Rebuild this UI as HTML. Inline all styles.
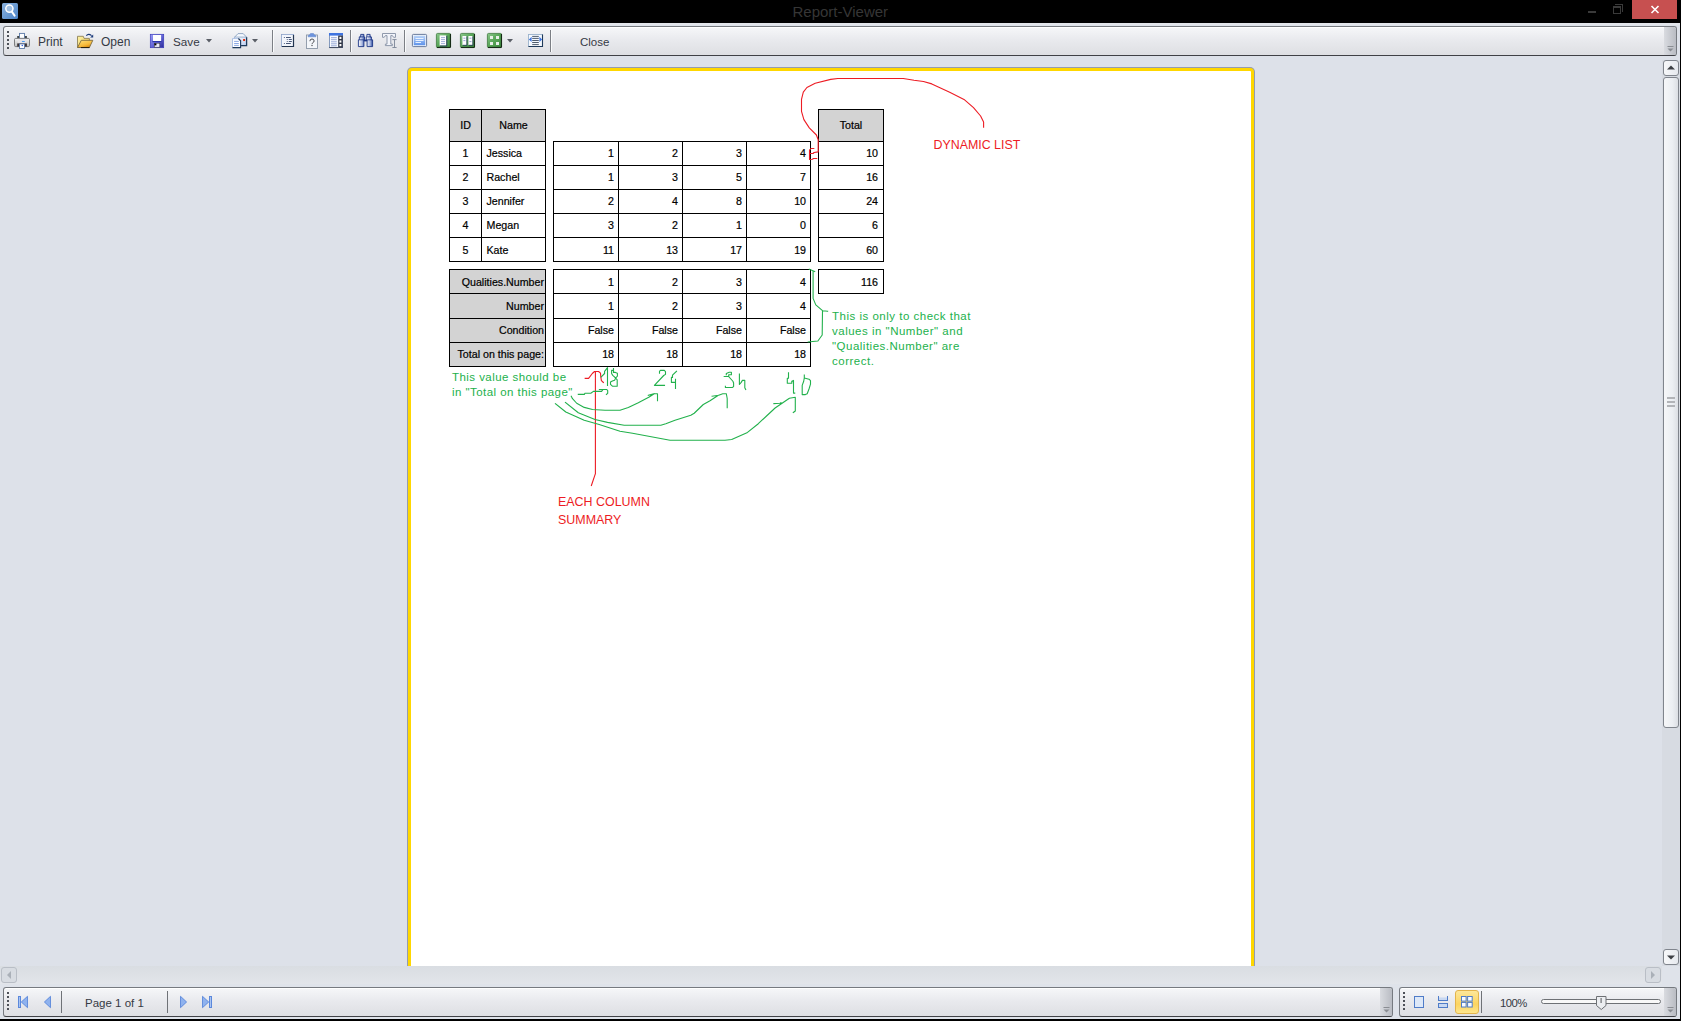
<!DOCTYPE html><html><head><meta charset="utf-8"><style>
html,body{margin:0;padding:0}
body{width:1681px;height:1021px;overflow:hidden;position:relative;background:#dde1e9;font-family:"Liberation Sans",sans-serif}
div{box-sizing:border-box}
.ui{font-family:"Liberation Sans",sans-serif;color:#1e395b}
svg{position:absolute;overflow:visible}
</style></head><body>
<div style="position:absolute;left:0px;top:0px;width:1681px;height:23px;background:#000"></div>
<svg style="left:2px;top:3px" width="16" height="16" viewBox="0 0 16 16">
<defs><linearGradient id="ai" x1="0" y1="0" x2="1" y2="1"><stop offset="0" stop-color="#8ab2de"/><stop offset="1" stop-color="#4d84c6"/></linearGradient></defs>
<rect x="0" y="0" width="16" height="16" rx="1.5" fill="url(#ai)"/>
<circle cx="7.4" cy="5.6" r="3.6" fill="#9fbfe2" stroke="#fff" stroke-width="1.5"/>
<line x1="9.8" y1="8.6" x2="12.6" y2="12.6" stroke="#fff" stroke-width="2" stroke-linecap="round"/>
</svg>
<div style="position:absolute;left:792.5px;top:1.5px;white-space:nowrap;font-size:15px;color:#363636;line-height:20px;">Report-Viewer</div>
<div style="position:absolute;left:1588px;top:11px;width:8px;height:2px;background:#3a3a3a"></div>
<div style="position:absolute;left:1613px;top:6px;width:8px;height:8px;border:1px solid #3a3a3a;border-top-width:2px"></div>
<div style="position:absolute;left:1615px;top:4px;width:8px;height:1px;background:#3a3a3a"></div>
<div style="position:absolute;left:1622px;top:4px;width:1px;height:8px;background:#3a3a3a"></div>
<div style="position:absolute;left:1632px;top:0px;width:45px;height:19px;background:#c75050"></div>
<svg style="left:1651px;top:6px" width="8" height="7" viewBox="0 0 8 7">
<path d="M0.5 0 L7.5 7 M7.5 0 L0.5 7" stroke="#fff" stroke-width="1.6"/></svg>
<div style="position:absolute;left:1680px;top:23px;width:1px;height:998px;background:#000"></div>
<div style="position:absolute;left:0px;top:1019px;width:1681px;height:2px;background:#000"></div>
<div style="position:absolute;left:0px;top:23px;width:1680px;height:37px;background:#dde1e9"></div>
<div style="position:absolute;left:0px;top:23px;width:1680px;height:2px;background:#e2e5eb"></div>
<div style="position:absolute;left:3px;top:26px;width:1674px;height:30px;border:1px solid #767a80;border-bottom-color:#404146;border-radius:3px;background:linear-gradient(#f6f7f9,#e9eaee 45%,#dedfe3);box-shadow:inset 0 1px 0 #fff"></div>
<div style="position:absolute;left:1664px;top:27px;width:12px;height:28px;background:linear-gradient(90deg,#d9dbe0,#b9bcc3);border-radius:0 2px 2px 0"></div>
<svg style="left:1667px;top:46px" width="7" height="7" viewBox="0 0 7 7">
<rect x="0.5" y="0" width="6" height="1" fill="#8a8d93"/><path d="M0.5 2.5 L6.5 2.5 L3.5 5.5Z" fill="#8a8d93"/></svg>
<div style="position:absolute;left:7px;top:31px;width:2px;height:2px;background:#4d5159"></div>
<div style="position:absolute;left:7px;top:35px;width:2px;height:2px;background:#4d5159"></div>
<div style="position:absolute;left:7px;top:39px;width:2px;height:2px;background:#4d5159"></div>
<div style="position:absolute;left:7px;top:43px;width:2px;height:2px;background:#4d5159"></div>
<div style="position:absolute;left:7px;top:47px;width:2px;height:2px;background:#4d5159"></div>
<svg style="left:14px;top:33px" width="16" height="16" viewBox="0 0 16 16">
<defs><linearGradient id="pb" x1="0" y1="0" x2="0" y2="1"><stop offset="0" stop-color="#f4f4f4"/><stop offset="1" stop-color="#bdbdbd"/></linearGradient></defs>
<rect x="3.2" y="3" width="9.7" height="2.4" fill="#3e4446"/>
<rect x="5.5" y="0.4" width="5" height="5" fill="#fff" stroke="#5c7aa6" stroke-width="0.9"/>
<rect x="0.5" y="5.4" width="15" height="8.2" rx="1.2" fill="url(#pb)" stroke="#707274" stroke-width="0.9"/>
<rect x="4" y="5.9" width="7.8" height="4" fill="#e6e4e8"/>
<rect x="7.9" y="8" width="3" height="1.1" rx="0.5" fill="#4a9cf0"/>
<rect x="3.2" y="10.4" width="9.7" height="3.2" fill="#3a3236"/>
<rect x="5.5" y="10.9" width="5" height="4.6" fill="#fff" stroke="#5c7aa6" stroke-width="0.9"/>
<circle cx="8.3" cy="12.5" r="0.8" fill="#3060e0"/>
</svg>
<div style="position:absolute;left:38px;top:34px;white-space:nowrap;font-size:12px;line-height:16px;color:#353944;">Print</div>
<svg style="left:77px;top:33px" width="17" height="15" viewBox="0 0 17 15">
<defs><linearGradient id="fb" x1="0" y1="0" x2="1" y2="1"><stop offset="0" stop-color="#fdf3a8"/><stop offset="1" stop-color="#f2c850"/></linearGradient>
<linearGradient id="ff" x1="0" y1="0" x2="0.6" y2="1"><stop offset="0" stop-color="#ffe27a"/><stop offset="0.7" stop-color="#f6b93a"/><stop offset="1" stop-color="#d88a10"/></linearGradient></defs>
<path d="M0.5 3.3 H6.3 L7 5.4 H12.4 V14.5 H0.5Z" fill="url(#fb)" stroke="#8f8258" stroke-width="0.9"/>
<path d="M0.5 14.5 L4.3 7.3 H15.8 L12.4 14.5Z" fill="url(#ff)" stroke="#7a6a40" stroke-width="0.9" stroke-linejoin="round"/>
<path d="M4 14.6 H12.4" stroke="#221a08" stroke-width="1"/>
<path d="M9.3 2.6 Q11.5 0 14.6 2.6" stroke="#1a3a7a" stroke-width="1.2" fill="none"/>
<path d="M13.2 4.4 L16.2 1.6 L16.2 4.4Z" fill="#1a3a7a"/>
</svg>
<div style="position:absolute;left:101px;top:34px;white-space:nowrap;font-size:12px;line-height:16px;color:#353944;">Open</div>
<svg style="left:150px;top:34px" width="14" height="14" viewBox="0 0 14 14">
<defs><linearGradient id="sv" x1="0" y1="0" x2="1" y2="1"><stop offset="0" stop-color="#9a9cf8"/><stop offset="0.5" stop-color="#6466d8"/><stop offset="1" stop-color="#2a2a98"/></linearGradient></defs>
<rect x="0.3" y="0.3" width="13.4" height="13.4" fill="url(#sv)" stroke="#3b3cb8" stroke-width="0.7"/>
<rect x="3" y="1" width="8.1" height="6" fill="#fdfdff"/>
<rect x="2.4" y="7" width="9.2" height="1.1" fill="#2a36a8"/>
<rect x="4.3" y="9.2" width="5.5" height="4" fill="#e8e8fa" stroke="#333" stroke-width="0.5"/>
<rect x="4.4" y="9.4" width="2" height="2" fill="#000"/>
</svg>
<div style="position:absolute;left:173px;top:34px;white-space:nowrap;font-size:11.7px;line-height:16px;color:#353944;">Save</div>
<svg style="left:206px;top:39px" width="6" height="4" viewBox="0 0 6 4"><path d="M0 0H6L3 3.5Z" fill="#5a5e66"/></svg>
<svg style="left:232px;top:33px" width="16" height="16" viewBox="0 0 16 16">
<defs><linearGradient id="env" x1="0" y1="0" x2="1" y2="1"><stop offset="0" stop-color="#ffffff"/><stop offset="1" stop-color="#b8ccf0"/></linearGradient></defs>
<path d="M2.6 4.2 L6 0.6 L11.2 0.6 L14.6 4.2Z" fill="#f4f8fe" stroke="#8aa2c0" stroke-width="0.9" stroke-linejoin="round"/>
<rect x="2.6" y="4.2" width="12" height="8.4" fill="url(#env)" stroke="#9ab0d0" stroke-width="0.6"/>
<path d="M14.6 4.2 V12.6 H8" stroke="#1f3a5a" stroke-width="1.3" fill="none"/>
<rect x="11.1" y="6" width="2" height="2" fill="#e0300e"/>
<path d="M0.5 5.6 H6.6 L8.6 7.6 V14.6 H0.5Z" fill="#fdfdff" stroke="#9ab4de" stroke-width="0.8"/>
<path d="M8.6 7.6 V14.6 H0.5" stroke="#1f3a5a" stroke-width="1.1" fill="none"/>
<path d="M6.4 5.5 L8.8 7.9" stroke="#1f3a5a" stroke-width="1.3"/>
<path d="M2.1 8.4H6.8M2.1 10.5H6.8M2.1 12.4H6.8" stroke="#7f9fe0" stroke-width="0.9"/>
</svg>
<svg style="left:252px;top:39px" width="6" height="4" viewBox="0 0 6 4"><path d="M0 0H6L3 3.5Z" fill="#5a5e66"/></svg>
<div style="position:absolute;left:272px;top:30px;width:1px;height:22px;background:#7c7f85"></div>
<div style="position:absolute;left:273px;top:30px;width:1px;height:22px;background:#fafbfc"></div>
<div style="position:absolute;left:350px;top:30px;width:1px;height:22px;background:#7c7f85"></div>
<div style="position:absolute;left:351px;top:30px;width:1px;height:22px;background:#fafbfc"></div>
<div style="position:absolute;left:404px;top:30px;width:1px;height:22px;background:#7c7f85"></div>
<div style="position:absolute;left:405px;top:30px;width:1px;height:22px;background:#fafbfc"></div>
<div style="position:absolute;left:550px;top:30px;width:1px;height:22px;background:#7c7f85"></div>
<div style="position:absolute;left:551px;top:30px;width:1px;height:22px;background:#fafbfc"></div>
<svg style="left:281px;top:34px" width="13" height="13" viewBox="0 0 13 13">
<rect x="0.4" y="0.4" width="12.2" height="12.2" fill="#f2f5fc" stroke="#8aa0c8" stroke-width="0.8"/>
<path d="M1 12.5H12.5V1" stroke="#22344f" stroke-width="1.2" fill="none"/>
<path d="M2.9 3.5H3.8M5 3.5H9.8M5.8 5.5H6.7M7.8 5.5H10.8M5.8 7.5H6.7M7.8 7.5H10.8M2.9 9.5H3.8M5 9.5H9.8" stroke="#34466a" stroke-width="0.9"/>
</svg>
<svg style="left:306px;top:33px" width="12" height="16" viewBox="0 0 12 16">
<rect x="0.5" y="2" width="11" height="13.5" fill="#f4f6fa" stroke="#8a96a6" stroke-width="0.9"/>
<path d="M2 3.8 Q2 1.8 4 1.8 L4.5 0.5 H7.5 L8 1.8 Q10 1.8 10 3.8Z" fill="#6d94de" stroke="#5a80c8" stroke-width="0.5"/>
<path d="M3.9 8.2 Q3.9 6 6 6 Q8.1 6 8.1 7.9 Q8.1 9.1 6.9 9.7 Q6 10.2 6 11.2" stroke="#4a4c52" stroke-width="1" fill="none"/>
<rect x="5.4" y="12" width="1.2" height="1.1" fill="#4a4c52"/>
</svg>
<svg style="left:329px;top:33px" width="14" height="15" viewBox="0 0 14 15">
<rect x="0.4" y="0.4" width="13.2" height="14.2" fill="#f8fafe" stroke="#6a84b0" stroke-width="0.8"/>
<rect x="0" y="0" width="14" height="2.6" fill="#3f74e0"/>
<rect x="9.2" y="2.6" width="4.6" height="12.2" fill="#2e3444"/>
<rect x="10.4" y="3.8" width="2" height="2.2" fill="#fff"/><rect x="10.4" y="7.4" width="2" height="2.2" fill="#fff"/><rect x="10.4" y="11" width="2" height="2.2" fill="#fff"/>
<path d="M2 4.7H7.8M2 6.7H7.8M2 8.8H7.8M2 10.8H7.8M2 12.8H7.8" stroke="#7d94cc" stroke-width="0.8"/>
<path d="M0.4 14.6H9.2" stroke="#2e3444" stroke-width="0.8"/>
</svg>
<svg style="left:358px;top:34px" width="15" height="13" viewBox="0 0 15 13">
<defs><linearGradient id="bn" x1="0" y1="0" x2="1" y2="0"><stop offset="0" stop-color="#ffffff"/><stop offset="0.6" stop-color="#aab8e0"/><stop offset="1" stop-color="#2a4aa0"/></linearGradient></defs>
<path d="M2.7 0.4 H5.9 V2.9 H6.6 V5.8 H5.9 V12.6 H0.4 V5.8 H1.3 V2.9 H2.7Z" fill="url(#bn)" stroke="#1c3586" stroke-width="0.9" stroke-linejoin="round"/>
<path d="M8.9 0.4 H12.1 V2.9 H13.4 V5.8 H14.6 V12.6 H9.1 V5.8 H8.3 V2.9 H8.9Z" fill="url(#bn)" stroke="#1c3586" stroke-width="0.9" stroke-linejoin="round"/>
<rect x="5.9" y="5.6" width="3.2" height="1.8" fill="#1c3586"/>
<path d="M1.2 5.8 H5.8 M9.2 5.8 H13.8 M1.6 2.9 H5.6 M9.2 2.9 H13" stroke="#1c3586" stroke-width="0.8"/>
</svg>
<svg style="left:382px;top:33px" width="15" height="15" viewBox="0 0 15 15">
<path d="M0.5 0.5 H13.5 V4.3 H11.6 L10.4 2.6 H8.8 V11.1 H10.4 V12.6 H3.4 V11.1 H5 V2.6 H3.4 L2.2 4.3 H0.5Z" fill="#f2f4fa" stroke="#8490a4" stroke-width="0.9" stroke-linejoin="miter"/>
<path d="M10.4 6.6 H14.6 M12.5 6.6 V14.5 M10.4 14.5 H14.6" stroke="#7b8596" stroke-width="0.9"/>
</svg>
<svg style="left:412px;top:34px" width="15" height="13" viewBox="0 0 15 13">
<defs><linearGradient id="bp" x1="0" y1="0" x2="0" y2="1"><stop offset="0" stop-color="#b9d3f8"/><stop offset="1" stop-color="#5d92ea"/></linearGradient></defs>
<rect x="0.4" y="0.4" width="14.2" height="12.2" rx="1" fill="#eef3fb" stroke="#4a5f86" stroke-width="0.8"/>
<rect x="1.8" y="1.8" width="11.4" height="9.4" fill="url(#bp)"/>
<path d="M3.5 4.5H11.5M3.5 6.5H11.5M3.5 8.5H9" stroke="#f2f7ff" stroke-width="0.9"/>
</svg>
<svg style="left:436px;top:33px" width="15" height="15" viewBox="0 0 15 15">
<defs><linearGradient id="g436" x1="0" y1="0" x2="1" y2="1"><stop offset="0" stop-color="#8cc88c"/><stop offset="0.45" stop-color="#5aa85a"/><stop offset="1" stop-color="#3d8a3d"/></linearGradient></defs>
<rect x="0.4" y="0.4" width="14.2" height="14.2" rx="1.2" fill="url(#g436)" stroke="#3f7a3f" stroke-width="0.8"/>
<path d="M14.4 1 V14.4 H1" stroke="#0f200f" stroke-width="1" fill="none"/><rect x="3.6" y="2.4" width="6.8" height="10.2" fill="#fdfdff"/><path d="M10.8 2.8 V13 H4" stroke="#23335a" stroke-width="0.9" fill="none"/><path d="M5 4.6H9M5 6.6H9M5 8.6H9M5 10.6H9" stroke="#8a9ad0" stroke-width="0.8"/></svg>
<svg style="left:460px;top:33px" width="15" height="15" viewBox="0 0 15 15">
<defs><linearGradient id="g460" x1="0" y1="0" x2="1" y2="1"><stop offset="0" stop-color="#8cc88c"/><stop offset="0.45" stop-color="#5aa85a"/><stop offset="1" stop-color="#3d8a3d"/></linearGradient></defs>
<rect x="0.4" y="0.4" width="14.2" height="14.2" rx="1.2" fill="url(#g460)" stroke="#3f7a3f" stroke-width="0.8"/>
<path d="M14.4 1 V14.4 H1" stroke="#0f200f" stroke-width="1" fill="none"/><rect x="2.4" y="3" width="4.2" height="9" fill="#fdfdff"/><rect x="8.4" y="3" width="4.2" height="9" fill="#fdfdff"/><path d="M6.9 3.4V12.3H2.8M12.9 3.4V12.3H8.8" stroke="#23335a" stroke-width="0.8" fill="none"/><path d="M3.4 5.2H5.4M3.4 7.6H5.4M9.4 5.2H11.4M9.4 8.6H11.4" stroke="#7080c0" stroke-width="0.7"/></svg>
<svg style="left:487px;top:33px" width="15" height="15" viewBox="0 0 15 15">
<defs><linearGradient id="g487" x1="0" y1="0" x2="1" y2="1"><stop offset="0" stop-color="#8cc88c"/><stop offset="0.45" stop-color="#5aa85a"/><stop offset="1" stop-color="#3d8a3d"/></linearGradient></defs>
<rect x="0.4" y="0.4" width="14.2" height="14.2" rx="1.2" fill="url(#g487)" stroke="#3f7a3f" stroke-width="0.8"/>
<path d="M14.4 1 V14.4 H1" stroke="#0f200f" stroke-width="1" fill="none"/><rect x="3" y="3" width="3" height="3" fill="#e8f0e8"/><rect x="9" y="3" width="3" height="3" fill="#e8f0e8"/><rect x="3" y="9" width="3" height="3" fill="#e8f0e8"/><rect x="9" y="9" width="3" height="3" fill="#e8f0e8"/></svg>
<svg style="left:507px;top:39px" width="6" height="4" viewBox="0 0 6 4"><path d="M0 0H6L3 3.5Z" fill="#5a5e66"/></svg>
<svg style="left:528px;top:34px" width="15" height="13" viewBox="0 0 15 13">
<rect x="0.5" y="0.5" width="14" height="12" fill="#f4f8fe" stroke="#9ab2cc" stroke-width="0.9"/>
<path d="M14.5 0.5 V12.5 H0.5" stroke="#1f3a5a" stroke-width="1.1" fill="none"/>
<path d="M4.2 2.4H10.8M4.2 4.4H10.8M4.2 6.5H10.8M4.2 8.5H10.8M4.2 10.6H10.8" stroke="#3c4a5c" stroke-width="0.9"/>
<path d="M0.9 5.4 L3.6 2.8 L3.6 8Z M14.1 5.4 L11.4 2.8 L11.4 8Z" fill="#3a72e0"/>
</svg>
<div style="position:absolute;left:580px;top:34px;white-space:nowrap;font-size:11.5px;line-height:16px;color:#353944;">Close</div>
<div style="position:absolute;left:0px;top:60px;width:1662px;height:906px;background:#dde1e9"></div>
<div style="position:absolute;left:407px;top:67px;width:848px;height:905px;border-radius:5px;background:#959cae"></div>
<div style="position:absolute;left:408px;top:68px;width:846px;height:905px;border:3px solid #ffd700;border-radius:4px;background:#fff"></div>
<div style="position:absolute;left:1662px;top:60px;width:18px;height:906px;background:#d7dbe2"></div>
<div style="position:absolute;left:1663px;top:60px;width:16px;height:16px;border:1px solid #80858d;border-radius:3px;background:linear-gradient(90deg,#f7f8fa,#e6e9ee)"></div>
<svg style="left:1667px;top:65px" width="8" height="5" viewBox="0 0 8 5"><path d="M0 4.5H8L4 0.5Z" fill="#3c3f44"/></svg>
<div style="position:absolute;left:1663px;top:77px;width:16px;height:651px;border:1px solid #80858d;border-radius:3px;background:linear-gradient(90deg,#f6f7f9,#eceff3 60%,#dcdfe4)"></div>
<div style="position:absolute;left:1667px;top:397px;width:8px;height:2px;background:#b2b4b8"></div>
<div style="position:absolute;left:1667px;top:401px;width:8px;height:2px;background:#b2b4b8"></div>
<div style="position:absolute;left:1667px;top:405px;width:8px;height:2px;background:#b2b4b8"></div>
<div style="position:absolute;left:1663px;top:949px;width:16px;height:16px;border:1px solid #80858d;border-radius:3px;background:linear-gradient(90deg,#f7f8fa,#e6e9ee)"></div>
<svg style="left:1667px;top:955px" width="8" height="5" viewBox="0 0 8 5"><path d="M0 0.5H8L4 4.5Z" fill="#3c3f44"/></svg>
<div style="position:absolute;left:0px;top:966px;width:1680px;height:21px;background:#dfe3ea"></div>
<div style="position:absolute;left:0px;top:966px;width:1662px;height:18px;background:linear-gradient(#d9dde2,#e2e5ea)"></div>
<div style="position:absolute;left:1px;top:967px;width:16px;height:16px;border:1px solid #b9bec6;border-radius:3px;background:#d8dce2"></div>
<svg style="left:7px;top:971px" width="4" height="8" viewBox="0 0 4 8"><path d="M4 0V8L0 4Z" fill="#aab0b8"/></svg>
<div style="position:absolute;left:1645px;top:967px;width:16px;height:16px;border:1px solid #b9bec6;border-radius:3px;background:#d8dce2"></div>
<svg style="left:1651px;top:971px" width="4" height="8" viewBox="0 0 4 8"><path d="M0 0V8L4 4Z" fill="#aab0b8"/></svg>
<div style="position:absolute;left:0px;top:984px;width:1680px;height:35px;background:#dfe3ea"></div>
<div style="position:absolute;left:3px;top:987px;width:1390px;height:30px;border:1px solid #767a80;border-bottom-color:#404146;border-radius:3px;background:linear-gradient(#f6f7f9,#e9eaee 45%,#dedfe3);box-shadow:inset 0 1px 0 #fff"></div>
<div style="position:absolute;left:1380px;top:988px;width:12px;height:28px;background:linear-gradient(90deg,#d9dbe0,#b9bcc3);border-radius:0 2px 2px 0"></div>
<svg style="left:1383px;top:1007px" width="7" height="7" viewBox="0 0 7 7">
<rect x="0.5" y="0" width="6" height="1" fill="#8a8d93"/><path d="M0.5 2.5 L6.5 2.5 L3.5 5.5Z" fill="#8a8d93"/></svg>
<div style="position:absolute;left:7px;top:992px;width:2px;height:2px;background:#4d5159"></div>
<div style="position:absolute;left:7px;top:996px;width:2px;height:2px;background:#4d5159"></div>
<div style="position:absolute;left:7px;top:1000px;width:2px;height:2px;background:#4d5159"></div>
<div style="position:absolute;left:7px;top:1004px;width:2px;height:2px;background:#4d5159"></div>
<div style="position:absolute;left:7px;top:1008px;width:2px;height:2px;background:#4d5159"></div>
<svg style="left:18px;top:996px" width="10" height="12" viewBox="0 0 10 12">
<rect x="0.5" y="0.5" width="2" height="11" fill="#a9c4f2" stroke="#5b88dc" stroke-width="1"/><path d="M9.5 0.3 V11.7 L3.3 6Z" fill="#8fb2ee" stroke="#4f7fd8" stroke-width="0.8" stroke-linejoin="round"/></svg>
<svg style="left:44px;top:996px" width="7" height="12" viewBox="0 0 7 12"><path d="M6.5 0.3V11.7L0.4 6Z" fill="#8fb2ee" stroke="#4f7fd8" stroke-width="0.8" stroke-linejoin="round"/></svg>
<div style="position:absolute;left:61px;top:991px;width:1px;height:22px;background:#6f7277"></div>
<div style="position:absolute;left:85px;top:995.5px;white-space:nowrap;font-size:11.5px;line-height:14px;color:#353944;">Page 1 of 1</div>
<div style="position:absolute;left:167px;top:991px;width:1px;height:22px;background:#6f7277"></div>
<svg style="left:180px;top:996px" width="7" height="12" viewBox="0 0 7 12"><path d="M0.5 0.3V11.7L6.6 6Z" fill="#8fb2ee" stroke="#4f7fd8" stroke-width="0.8" stroke-linejoin="round"/></svg>
<svg style="left:202px;top:996px" width="10" height="12" viewBox="0 0 10 12">
<path d="M0.5 0.3 V11.7 L6.7 6Z" fill="#8fb2ee" stroke="#4f7fd8" stroke-width="0.8" stroke-linejoin="round"/><rect x="7.5" y="0.5" width="2" height="11" fill="#a9c4f2" stroke="#5b88dc" stroke-width="1"/></svg>
<div style="position:absolute;left:1399px;top:987px;width:278px;height:30px;border:1px solid #767a80;border-bottom-color:#404146;border-radius:3px;background:linear-gradient(#f6f7f9,#e9eaee 45%,#dedfe3);box-shadow:inset 0 1px 0 #fff"></div>
<div style="position:absolute;left:1664px;top:988px;width:12px;height:28px;background:linear-gradient(90deg,#d9dbe0,#b9bcc3);border-radius:0 2px 2px 0"></div>
<svg style="left:1667px;top:1007px" width="7" height="7" viewBox="0 0 7 7">
<rect x="0.5" y="0" width="6" height="1" fill="#8a8d93"/><path d="M0.5 2.5 L6.5 2.5 L3.5 5.5Z" fill="#8a8d93"/></svg>
<div style="position:absolute;left:1403px;top:992px;width:2px;height:2px;background:#4d5159"></div>
<div style="position:absolute;left:1403px;top:996px;width:2px;height:2px;background:#4d5159"></div>
<div style="position:absolute;left:1403px;top:1000px;width:2px;height:2px;background:#4d5159"></div>
<div style="position:absolute;left:1403px;top:1004px;width:2px;height:2px;background:#4d5159"></div>
<div style="position:absolute;left:1403px;top:1008px;width:2px;height:2px;background:#4d5159"></div>
<svg style="left:1414px;top:996px" width="10" height="12" viewBox="0 0 10 12">
<rect x="0.5" y="0.5" width="9" height="11" fill="#dde8f8" stroke="#4f7cc8" stroke-width="1"/></svg>
<svg style="left:1438px;top:996px" width="10" height="12" viewBox="0 0 10 12">
<rect x="1" y="1.5" width="8" height="3" fill="#c8d8f2"/><rect x="1" y="7.5" width="8" height="4" fill="#c8d8f2"/>
<path d="M0.5 0V5M9.5 0V5M0.5 4.5H9.5M0.5 7V12M9.5 7V12M0.5 7.5H9.5M0.5 11.5H9.5" stroke="#4f7cc8" stroke-width="1"/></svg>
<div style="position:absolute;left:1455px;top:990px;width:24px;height:24px;border:1px solid #e3b44c;border-radius:3px;background:linear-gradient(#fde79a,#fcd461 60%,#fde68c)"></div>
<svg style="left:1461px;top:996px" width="12" height="12" viewBox="0 0 12 12">
<rect x="0.5" y="0.5" width="4.6" height="4.6" fill="#f8fbff" stroke="#4f7cc8" stroke-width="1"/><rect x="6.6" y="0.5" width="4.6" height="4.6" fill="#f8fbff" stroke="#4f7cc8" stroke-width="1"/>
<rect x="0.5" y="6.4" width="4.6" height="4.6" fill="#f8fbff" stroke="#4f7cc8" stroke-width="1"/><rect x="6.6" y="6.4" width="4.6" height="4.6" fill="#f8fbff" stroke="#4f7cc8" stroke-width="1"/></svg>
<div style="position:absolute;left:1481px;top:991px;width:1px;height:22px;background:#6f7277"></div>
<div style="position:absolute;left:1500px;top:995.5px;white-space:nowrap;font-size:11.3px;line-height:14px;letter-spacing:-0.5px;color:#353944;">100%</div>
<div style="position:absolute;left:1541px;top:999px;width:120px;height:5px;border:1px solid #6e7175;border-radius:3px;background:#f8f8f8"></div>
<svg style="left:1596px;top:996px" width="11" height="14" viewBox="0 0 11 14">
<path d="M0.5 0.5H10V9.5L5.25 13.5L0.5 9.5Z" fill="#eceef1" stroke="#6e7175" stroke-width="1"/><rect x="4.5" y="2" width="1.2" height="5" fill="#6e7175"/></svg>
<div style="position:absolute;left:449px;top:109px;width:97px;height:33px;background:#d3d3d3"></div>
<div style="position:absolute;left:449px;top:109px;width:97px;height:1px;background:#000"></div>
<div style="position:absolute;left:449px;top:141px;width:97px;height:1px;background:#000"></div>
<div style="position:absolute;left:449px;top:109px;width:1px;height:33px;background:#000"></div>
<div style="position:absolute;left:481px;top:109px;width:1px;height:33px;background:#000"></div>
<div style="position:absolute;left:545px;top:109px;width:1px;height:33px;background:#000"></div>
<div style="position:absolute;left:449px;top:119.0px;white-space:nowrap;font-size:10.67px;color:#000;line-height:12px;-webkit-text-stroke:0.2px #000;width:33px;text-align:center;">ID</div>
<div style="position:absolute;left:481px;top:119.0px;white-space:nowrap;font-size:10.67px;color:#000;line-height:12px;-webkit-text-stroke:0.2px #000;width:65px;text-align:center;">Name</div>
<div style="position:absolute;left:818px;top:109px;width:66px;height:33px;background:#d3d3d3"></div>
<div style="position:absolute;left:818px;top:109px;width:66px;height:1px;background:#000"></div>
<div style="position:absolute;left:818px;top:141px;width:66px;height:1px;background:#000"></div>
<div style="position:absolute;left:818px;top:109px;width:1px;height:33px;background:#000"></div>
<div style="position:absolute;left:883px;top:109px;width:1px;height:33px;background:#000"></div>
<div style="position:absolute;left:818px;top:119.0px;white-space:nowrap;font-size:10.67px;color:#000;line-height:12px;-webkit-text-stroke:0.2px #000;width:66px;text-align:center;">Total</div>
<div style="position:absolute;left:449px;top:141px;width:97px;height:1px;background:#000"></div>
<div style="position:absolute;left:553px;top:141px;width:258px;height:1px;background:#000"></div>
<div style="position:absolute;left:818px;top:141px;width:66px;height:1px;background:#000"></div>
<div style="position:absolute;left:449px;top:165px;width:97px;height:1px;background:#000"></div>
<div style="position:absolute;left:553px;top:165px;width:258px;height:1px;background:#000"></div>
<div style="position:absolute;left:818px;top:165px;width:66px;height:1px;background:#000"></div>
<div style="position:absolute;left:449px;top:189px;width:97px;height:1px;background:#000"></div>
<div style="position:absolute;left:553px;top:189px;width:258px;height:1px;background:#000"></div>
<div style="position:absolute;left:818px;top:189px;width:66px;height:1px;background:#000"></div>
<div style="position:absolute;left:449px;top:213px;width:97px;height:1px;background:#000"></div>
<div style="position:absolute;left:553px;top:213px;width:258px;height:1px;background:#000"></div>
<div style="position:absolute;left:818px;top:213px;width:66px;height:1px;background:#000"></div>
<div style="position:absolute;left:449px;top:237px;width:97px;height:1px;background:#000"></div>
<div style="position:absolute;left:553px;top:237px;width:258px;height:1px;background:#000"></div>
<div style="position:absolute;left:818px;top:237px;width:66px;height:1px;background:#000"></div>
<div style="position:absolute;left:449px;top:261px;width:97px;height:1px;background:#000"></div>
<div style="position:absolute;left:553px;top:261px;width:258px;height:1px;background:#000"></div>
<div style="position:absolute;left:818px;top:261px;width:66px;height:1px;background:#000"></div>
<div style="position:absolute;left:449px;top:141px;width:1px;height:121px;background:#000"></div>
<div style="position:absolute;left:481px;top:141px;width:1px;height:121px;background:#000"></div>
<div style="position:absolute;left:545px;top:141px;width:1px;height:121px;background:#000"></div>
<div style="position:absolute;left:553px;top:141px;width:1px;height:121px;background:#000"></div>
<div style="position:absolute;left:618px;top:141px;width:1px;height:121px;background:#000"></div>
<div style="position:absolute;left:682px;top:141px;width:1px;height:121px;background:#000"></div>
<div style="position:absolute;left:746px;top:141px;width:1px;height:121px;background:#000"></div>
<div style="position:absolute;left:810px;top:141px;width:1px;height:121px;background:#000"></div>
<div style="position:absolute;left:818px;top:141px;width:1px;height:121px;background:#000"></div>
<div style="position:absolute;left:883px;top:141px;width:1px;height:121px;background:#000"></div>
<div style="position:absolute;left:449px;top:147.0px;white-space:nowrap;font-size:10.67px;color:#000;line-height:12px;-webkit-text-stroke:0.2px #000;width:33px;text-align:center;">1</div>
<div style="position:absolute;left:486.5px;top:147.0px;white-space:nowrap;font-size:10.67px;color:#000;line-height:12px;-webkit-text-stroke:0.2px #000;">Jessica</div>
<div style="position:absolute;left:553px;top:147.0px;width:61px;text-align:right;white-space:nowrap;font-size:10.67px;color:#000;line-height:12px;-webkit-text-stroke:0.2px #000;">1</div>
<div style="position:absolute;left:618px;top:147.0px;width:60px;text-align:right;white-space:nowrap;font-size:10.67px;color:#000;line-height:12px;-webkit-text-stroke:0.2px #000;">2</div>
<div style="position:absolute;left:682px;top:147.0px;width:60px;text-align:right;white-space:nowrap;font-size:10.67px;color:#000;line-height:12px;-webkit-text-stroke:0.2px #000;">3</div>
<div style="position:absolute;left:746px;top:147.0px;width:60px;text-align:right;white-space:nowrap;font-size:10.67px;color:#000;line-height:12px;-webkit-text-stroke:0.2px #000;">4</div>
<div style="position:absolute;left:818px;top:147.0px;width:60px;text-align:right;white-space:nowrap;font-size:10.67px;color:#000;line-height:12px;-webkit-text-stroke:0.2px #000;">10</div>
<div style="position:absolute;left:449px;top:171.0px;white-space:nowrap;font-size:10.67px;color:#000;line-height:12px;-webkit-text-stroke:0.2px #000;width:33px;text-align:center;">2</div>
<div style="position:absolute;left:486.5px;top:171.0px;white-space:nowrap;font-size:10.67px;color:#000;line-height:12px;-webkit-text-stroke:0.2px #000;">Rachel</div>
<div style="position:absolute;left:553px;top:171.0px;width:61px;text-align:right;white-space:nowrap;font-size:10.67px;color:#000;line-height:12px;-webkit-text-stroke:0.2px #000;">1</div>
<div style="position:absolute;left:618px;top:171.0px;width:60px;text-align:right;white-space:nowrap;font-size:10.67px;color:#000;line-height:12px;-webkit-text-stroke:0.2px #000;">3</div>
<div style="position:absolute;left:682px;top:171.0px;width:60px;text-align:right;white-space:nowrap;font-size:10.67px;color:#000;line-height:12px;-webkit-text-stroke:0.2px #000;">5</div>
<div style="position:absolute;left:746px;top:171.0px;width:60px;text-align:right;white-space:nowrap;font-size:10.67px;color:#000;line-height:12px;-webkit-text-stroke:0.2px #000;">7</div>
<div style="position:absolute;left:818px;top:171.0px;width:60px;text-align:right;white-space:nowrap;font-size:10.67px;color:#000;line-height:12px;-webkit-text-stroke:0.2px #000;">16</div>
<div style="position:absolute;left:449px;top:195.0px;white-space:nowrap;font-size:10.67px;color:#000;line-height:12px;-webkit-text-stroke:0.2px #000;width:33px;text-align:center;">3</div>
<div style="position:absolute;left:486.5px;top:195.0px;white-space:nowrap;font-size:10.67px;color:#000;line-height:12px;-webkit-text-stroke:0.2px #000;">Jennifer</div>
<div style="position:absolute;left:553px;top:195.0px;width:61px;text-align:right;white-space:nowrap;font-size:10.67px;color:#000;line-height:12px;-webkit-text-stroke:0.2px #000;">2</div>
<div style="position:absolute;left:618px;top:195.0px;width:60px;text-align:right;white-space:nowrap;font-size:10.67px;color:#000;line-height:12px;-webkit-text-stroke:0.2px #000;">4</div>
<div style="position:absolute;left:682px;top:195.0px;width:60px;text-align:right;white-space:nowrap;font-size:10.67px;color:#000;line-height:12px;-webkit-text-stroke:0.2px #000;">8</div>
<div style="position:absolute;left:746px;top:195.0px;width:60px;text-align:right;white-space:nowrap;font-size:10.67px;color:#000;line-height:12px;-webkit-text-stroke:0.2px #000;">10</div>
<div style="position:absolute;left:818px;top:195.0px;width:60px;text-align:right;white-space:nowrap;font-size:10.67px;color:#000;line-height:12px;-webkit-text-stroke:0.2px #000;">24</div>
<div style="position:absolute;left:449px;top:219.0px;white-space:nowrap;font-size:10.67px;color:#000;line-height:12px;-webkit-text-stroke:0.2px #000;width:33px;text-align:center;">4</div>
<div style="position:absolute;left:486.5px;top:219.0px;white-space:nowrap;font-size:10.67px;color:#000;line-height:12px;-webkit-text-stroke:0.2px #000;">Megan</div>
<div style="position:absolute;left:553px;top:219.0px;width:61px;text-align:right;white-space:nowrap;font-size:10.67px;color:#000;line-height:12px;-webkit-text-stroke:0.2px #000;">3</div>
<div style="position:absolute;left:618px;top:219.0px;width:60px;text-align:right;white-space:nowrap;font-size:10.67px;color:#000;line-height:12px;-webkit-text-stroke:0.2px #000;">2</div>
<div style="position:absolute;left:682px;top:219.0px;width:60px;text-align:right;white-space:nowrap;font-size:10.67px;color:#000;line-height:12px;-webkit-text-stroke:0.2px #000;">1</div>
<div style="position:absolute;left:746px;top:219.0px;width:60px;text-align:right;white-space:nowrap;font-size:10.67px;color:#000;line-height:12px;-webkit-text-stroke:0.2px #000;">0</div>
<div style="position:absolute;left:818px;top:219.0px;width:60px;text-align:right;white-space:nowrap;font-size:10.67px;color:#000;line-height:12px;-webkit-text-stroke:0.2px #000;">6</div>
<div style="position:absolute;left:449px;top:244.0px;white-space:nowrap;font-size:10.67px;color:#000;line-height:12px;-webkit-text-stroke:0.2px #000;width:33px;text-align:center;">5</div>
<div style="position:absolute;left:486.5px;top:244.0px;white-space:nowrap;font-size:10.67px;color:#000;line-height:12px;-webkit-text-stroke:0.2px #000;">Kate</div>
<div style="position:absolute;left:553px;top:244.0px;width:61px;text-align:right;white-space:nowrap;font-size:10.67px;color:#000;line-height:12px;-webkit-text-stroke:0.2px #000;">11</div>
<div style="position:absolute;left:618px;top:244.0px;width:60px;text-align:right;white-space:nowrap;font-size:10.67px;color:#000;line-height:12px;-webkit-text-stroke:0.2px #000;">13</div>
<div style="position:absolute;left:682px;top:244.0px;width:60px;text-align:right;white-space:nowrap;font-size:10.67px;color:#000;line-height:12px;-webkit-text-stroke:0.2px #000;">17</div>
<div style="position:absolute;left:746px;top:244.0px;width:60px;text-align:right;white-space:nowrap;font-size:10.67px;color:#000;line-height:12px;-webkit-text-stroke:0.2px #000;">19</div>
<div style="position:absolute;left:818px;top:244.0px;width:60px;text-align:right;white-space:nowrap;font-size:10.67px;color:#000;line-height:12px;-webkit-text-stroke:0.2px #000;">60</div>
<div style="position:absolute;left:449px;top:269px;width:97px;height:98px;background:#d3d3d3"></div>
<div style="position:absolute;left:449px;top:269px;width:97px;height:1px;background:#000"></div>
<div style="position:absolute;left:553px;top:269px;width:258px;height:1px;background:#000"></div>
<div style="position:absolute;left:449px;top:293px;width:97px;height:1px;background:#000"></div>
<div style="position:absolute;left:553px;top:293px;width:258px;height:1px;background:#000"></div>
<div style="position:absolute;left:449px;top:318px;width:97px;height:1px;background:#000"></div>
<div style="position:absolute;left:553px;top:318px;width:258px;height:1px;background:#000"></div>
<div style="position:absolute;left:449px;top:342px;width:97px;height:1px;background:#000"></div>
<div style="position:absolute;left:553px;top:342px;width:258px;height:1px;background:#000"></div>
<div style="position:absolute;left:449px;top:366px;width:97px;height:1px;background:#000"></div>
<div style="position:absolute;left:553px;top:366px;width:258px;height:1px;background:#000"></div>
<div style="position:absolute;left:449px;top:269px;width:1px;height:98px;background:#000"></div>
<div style="position:absolute;left:545px;top:269px;width:1px;height:98px;background:#000"></div>
<div style="position:absolute;left:553px;top:269px;width:1px;height:98px;background:#000"></div>
<div style="position:absolute;left:618px;top:269px;width:1px;height:98px;background:#000"></div>
<div style="position:absolute;left:682px;top:269px;width:1px;height:98px;background:#000"></div>
<div style="position:absolute;left:746px;top:269px;width:1px;height:98px;background:#000"></div>
<div style="position:absolute;left:810px;top:269px;width:1px;height:98px;background:#000"></div>
<div style="position:absolute;left:449px;top:276.0px;width:95px;text-align:right;white-space:nowrap;font-size:10.67px;color:#000;line-height:12px;-webkit-text-stroke:0.2px #000;">Qualities.Number</div>
<div style="position:absolute;left:553px;top:276.0px;width:61px;text-align:right;white-space:nowrap;font-size:10.67px;color:#000;line-height:12px;-webkit-text-stroke:0.2px #000;">1</div>
<div style="position:absolute;left:618px;top:276.0px;width:60px;text-align:right;white-space:nowrap;font-size:10.67px;color:#000;line-height:12px;-webkit-text-stroke:0.2px #000;">2</div>
<div style="position:absolute;left:682px;top:276.0px;width:60px;text-align:right;white-space:nowrap;font-size:10.67px;color:#000;line-height:12px;-webkit-text-stroke:0.2px #000;">3</div>
<div style="position:absolute;left:746px;top:276.0px;width:60px;text-align:right;white-space:nowrap;font-size:10.67px;color:#000;line-height:12px;-webkit-text-stroke:0.2px #000;">4</div>
<div style="position:absolute;left:449px;top:299.5px;width:95px;text-align:right;white-space:nowrap;font-size:10.67px;color:#000;line-height:12px;-webkit-text-stroke:0.2px #000;">Number</div>
<div style="position:absolute;left:553px;top:299.5px;width:61px;text-align:right;white-space:nowrap;font-size:10.67px;color:#000;line-height:12px;-webkit-text-stroke:0.2px #000;">1</div>
<div style="position:absolute;left:618px;top:299.5px;width:60px;text-align:right;white-space:nowrap;font-size:10.67px;color:#000;line-height:12px;-webkit-text-stroke:0.2px #000;">2</div>
<div style="position:absolute;left:682px;top:299.5px;width:60px;text-align:right;white-space:nowrap;font-size:10.67px;color:#000;line-height:12px;-webkit-text-stroke:0.2px #000;">3</div>
<div style="position:absolute;left:746px;top:299.5px;width:60px;text-align:right;white-space:nowrap;font-size:10.67px;color:#000;line-height:12px;-webkit-text-stroke:0.2px #000;">4</div>
<div style="position:absolute;left:449px;top:324.0px;width:95px;text-align:right;white-space:nowrap;font-size:10.67px;color:#000;line-height:12px;-webkit-text-stroke:0.2px #000;">Condition</div>
<div style="position:absolute;left:553px;top:324.0px;width:61px;text-align:right;white-space:nowrap;font-size:10.67px;color:#000;line-height:12px;-webkit-text-stroke:0.2px #000;">False</div>
<div style="position:absolute;left:618px;top:324.0px;width:60px;text-align:right;white-space:nowrap;font-size:10.67px;color:#000;line-height:12px;-webkit-text-stroke:0.2px #000;">False</div>
<div style="position:absolute;left:682px;top:324.0px;width:60px;text-align:right;white-space:nowrap;font-size:10.67px;color:#000;line-height:12px;-webkit-text-stroke:0.2px #000;">False</div>
<div style="position:absolute;left:746px;top:324.0px;width:60px;text-align:right;white-space:nowrap;font-size:10.67px;color:#000;line-height:12px;-webkit-text-stroke:0.2px #000;">False</div>
<div style="position:absolute;left:449px;top:348.0px;width:95px;text-align:right;white-space:nowrap;font-size:10.67px;color:#000;line-height:12px;-webkit-text-stroke:0.2px #000;">Total on this page:</div>
<div style="position:absolute;left:553px;top:348.0px;width:61px;text-align:right;white-space:nowrap;font-size:10.67px;color:#000;line-height:12px;-webkit-text-stroke:0.2px #000;">18</div>
<div style="position:absolute;left:618px;top:348.0px;width:60px;text-align:right;white-space:nowrap;font-size:10.67px;color:#000;line-height:12px;-webkit-text-stroke:0.2px #000;">18</div>
<div style="position:absolute;left:682px;top:348.0px;width:60px;text-align:right;white-space:nowrap;font-size:10.67px;color:#000;line-height:12px;-webkit-text-stroke:0.2px #000;">18</div>
<div style="position:absolute;left:746px;top:348.0px;width:60px;text-align:right;white-space:nowrap;font-size:10.67px;color:#000;line-height:12px;-webkit-text-stroke:0.2px #000;">18</div>
<div style="position:absolute;left:818px;top:269px;width:66px;height:1px;background:#000"></div>
<div style="position:absolute;left:818px;top:293px;width:66px;height:1px;background:#000"></div>
<div style="position:absolute;left:818px;top:269px;width:1px;height:25px;background:#000"></div>
<div style="position:absolute;left:883px;top:269px;width:1px;height:25px;background:#000"></div>
<div style="position:absolute;left:818px;top:276.0px;width:60px;text-align:right;white-space:nowrap;font-size:10.67px;color:#000;line-height:12px;-webkit-text-stroke:0.2px #000;">116</div>
<div style="position:absolute;left:933.5px;top:137.5px;white-space:nowrap;font-family:'Liberation Sans',sans-serif;font-size:12.4px;line-height:14px;color:#ed1c24;">DYNAMIC LIST</div>
<div style="position:absolute;left:558px;top:493px;white-space:nowrap;font-family:'Liberation Sans',sans-serif;font-size:12.45px;line-height:18px;color:#ed1c24;">EACH COLUMN<br>SUMMARY</div>
<div style="position:absolute;left:452px;top:370.3px;white-space:nowrap;font-family:'Liberation Sans',sans-serif;font-size:11.5px;line-height:14.6px;color:#22b14c;letter-spacing:0.45px;">This value should be<br>in &quot;Total on this page&quot;</div>
<div style="position:absolute;left:832px;top:309.3px;white-space:nowrap;font-family:'Liberation Sans',sans-serif;font-size:11.5px;line-height:15px;color:#22b14c;letter-spacing:0.5px;">This is only to check that<br>values in &quot;Number&quot; and<br>&quot;Qualities.Number&quot; are<br>correct.</div>
<svg style="left:0;top:0" width="1681" height="1021"><path d="M983.6 127.3 L983.6 122 L980.6 116 L973.5 107.7 L964 99.4 L949.7 92.2 L931.8 83.9 L923.5 81.5 L914 80.3 L903.3 78.5 L837.8 78.5 L830.7 79.4 L815.2 83.3 L806.9 87.5 L803.3 92.2 L801.5 99.4 L801.5 111.3 L803.9 119.6 L809.3 127.9 L816.4 135 L818.2 139.8 L818.2 151.9 L814.1 152.5 L813.1 153.5 L809.7 153.5" fill="none" stroke="#ed1c24" stroke-width="1.1" stroke-linejoin="round" stroke-linecap="square"/></svg>
<svg style="left:0;top:0" width="1681" height="1021"><path d="M813.8 148.5 L811 148.5 L809.5 150.2 L809.5 159.5 L812.4 159.3 L813.4 158.5 L816.7 158.5" fill="none" stroke="#ed1c24" stroke-width="1.1" stroke-linejoin="round" stroke-linecap="square"/></svg>
<svg style="left:0;top:0" width="1681" height="1021"><path d="M595.4 473.6 L595.4 371.7 M585.2 378.4 L588.6 378.4 L592.3 373.5 L594.5 371.5 L598.6 371.5 L600.5 373.2 L600.8 376.9 L601.4 380.6 L603.4 382.5 M595.4 473.6 L591.4 485.5" fill="none" stroke="#ed1c24" stroke-width="1.1" stroke-linejoin="round" stroke-linecap="square"/></svg>
<svg style="left:0;top:0" width="1681" height="1021"><path d="M809.3 269.3 L814.7 271.5 M813.1 271 L813.1 298.4 L815.8 304.9 L822.8 310.8 L827.6 311.3 M822.5 311 L822.2 335 L817.9 341 L808.2 342" fill="none" stroke="#22b14c" stroke-width="1.1" stroke-linejoin="round" stroke-linecap="square"/></svg>
<svg style="left:0;top:0" width="1681" height="1021"><path d="M601.2 376.9 L604.6 373.5 L604.6 371.3 L607.5 367.6 L607.5 385.4" fill="none" stroke="#22b14c" stroke-width="1.1" stroke-linejoin="round" stroke-linecap="square"/></svg>
<svg style="left:0;top:0" width="1681" height="1021"><path d="M613.5 368.5 L613.5 372.4 L615.4 372.4 L617.4 373.2 L617.4 376.1 L615.7 378 L614.6 380.2 L612.4 381 L610.5 382.1 L610.5 384.3 L612.4 386.2 L617.2 386.2 L617.2 379.9 L615.7 378 L612.75 375.4 L611.6 373.5 L611.6 370.4 L613.5 370.4" fill="none" stroke="#22b14c" stroke-width="1.1" stroke-linejoin="round" stroke-linecap="square"/></svg>
<svg style="left:0;top:0" width="1681" height="1021"><path d="M659.5 373.3 L659.5 371.4 L660.4 370.4 L664.3 370.4 L665.5 371.7 L665.5 374.4 L663.7 375.5 L654.4 385.4 L664.5 385.4" fill="none" stroke="#22b14c" stroke-width="1.1" stroke-linejoin="round" stroke-linecap="square"/></svg>
<svg style="left:0;top:0" width="1681" height="1021"><path d="M676.5 371.3 L672.5 375.2 L672.5 377.4 L671.4 377.4 L671.4 382.4 L675 382.4 M675.5 379.4 L675.5 388.4" fill="none" stroke="#22b14c" stroke-width="1.1" stroke-linejoin="round" stroke-linecap="square"/></svg>
<svg style="left:0;top:0" width="1681" height="1021"><path d="M724.2 376.5 L728.7 376.5 L728.7 374.7 L731.4 374.7 L731.4 372.3 L729.3 372.3 L726.3 373.5 L726.3 374.7 M728.7 376.5 L732.9 381.25 L733.6 383 L733.6 386.6 L732.3 387.5 L725.4 387.5 L725.4 386.3" fill="none" stroke="#22b14c" stroke-width="1.1" stroke-linejoin="round" stroke-linecap="square"/></svg>
<svg style="left:0;top:0" width="1681" height="1021"><path d="M739.4 374.1 L739.4 384.5 L741.2 382.4 L742.4 380.4 L744.8 380.4 L744.8 387.8 L745.7 389.6" fill="none" stroke="#22b14c" stroke-width="1.1" stroke-linejoin="round" stroke-linecap="square"/></svg>
<svg style="left:0;top:0" width="1681" height="1021"><path d="M788.5 372.9 L788.5 378.3 L787.3 378.3 L787.3 383.3 L791.8 383.3 L791.8 381.25 L793.5 380.4 L793.5 393.1 L794.7 393.1" fill="none" stroke="#22b14c" stroke-width="1.1" stroke-linejoin="round" stroke-linecap="square"/></svg>
<svg style="left:0;top:0" width="1681" height="1021"><path d="M804.3 375 L804.3 378 L809 379.2 L810.5 380.7 L810.5 384.2 L809 389 L807.2 393.7 L805.4 394.6 L802.2 394.6 L802.2 385.4 L803.7 381.25 L804.3 378" fill="none" stroke="#22b14c" stroke-width="1.1" stroke-linejoin="round" stroke-linecap="square"/></svg>
<svg style="left:0;top:0" width="1681" height="1021"><path d="M578.3 394.4 L584.5 394.4 L584.8 393.3 L590.8 393.3 L593.4 391.4 L601.6 391.4 L602.7 389.9 M599.4 389.5 L606.8 389.5 L607.7 390.7 L607.7 393.3 L606.4 394.4" fill="none" stroke="#22b14c" stroke-width="1.1" stroke-linejoin="round" stroke-linecap="square"/></svg>
<svg style="left:0;top:0" width="1681" height="1021"><path d="M571.25 396.2 L572.5 398.7 L576.7 403.25 L584.2 407.4 L592.5 409.5 L605 410.3 L620 410.3 L628.3 407.4 L638.3 402.8 L649.2 397 L654.2 393.7 L657.5 393.7 L657.5 400.75 M648.3 395.3 L654.2 393.7" fill="none" stroke="#22b14c" stroke-width="1.1" stroke-linejoin="round" stroke-linecap="square"/></svg>
<svg style="left:0;top:0" width="1681" height="1021"><path d="M565.4 402.4 L578.3 412.8 L595 419.5 L607.5 422.4 L624.2 425.3 L660.8 425.3 L665.8 423.7 L675 420.3 L690.8 415.3 L694.2 413.25 L703.3 404.5 L710 400.75 L718 395.5 L722.8 393.7 L726.3 393.7 L727.2 398.5 L727.2 407.7 M712.1 396.2 L718.3 395.3" fill="none" stroke="#22b14c" stroke-width="1.1" stroke-linejoin="round" stroke-linecap="square"/></svg>
<svg style="left:0;top:0" width="1681" height="1021"><path d="M555.4 403.7 L565.8 412 L584.2 420.3 L599.2 424.5 L620 431.2 L632.5 433.25 L670 440.3 L725 440.3 L731.7 439.5 L747.5 432.4 L758.3 423.7 L766.8 415.75 L775.1 408 L782.8 402.7 L789.4 398.2 L795.3 397.3 L795.3 411 L793.3 412.5 M773.9 403.6 L779.9 403.3 L781 402.7" fill="none" stroke="#22b14c" stroke-width="1.1" stroke-linejoin="round" stroke-linecap="square"/></svg>
</body></html>
